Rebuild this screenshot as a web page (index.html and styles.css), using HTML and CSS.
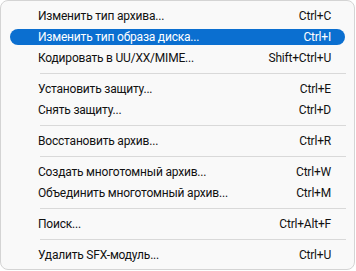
FILE: index.html
```html
<!DOCTYPE html>
<html lang="ru">
<head>
    <meta charset="UTF-8">
    <meta name="viewport" content="width=device-width, initial-scale=1.0">
    <title>Команды</title>
    <link rel="stylesheet" href="styles.css">
</head>

<body>
    <!-- Context menu -->
    <ul class="menu">
        <li class="item"><span>Изменить тип архива...</span><span class="key">Ctrl+C</span></li>
        <li class="item active"><span>Изменить тип образа диска...</span><span class="key">Ctrl+I</span></li>
        <li class="item"><span>Кодировать в UU/XX/MIME...</span><span class="key">Shift+Ctrl+U</span></li>
        <li class="sep"></li>
        <li class="item"><span>Установить защиту...</span><span class="key">Ctrl+E</span></li>
        <li class="item"><span>Снять защиту...</span><span class="key">Ctrl+D</span></li>
        <li class="sep"></li>
        <li class="item"><span>Восстановить архив...</span><span class="key">Ctrl+R</span></li>
        <li class="sep"></li>
        <li class="item"><span>Создать многотомный архив...</span><span class="key">Ctrl+W</span></li>
        <li class="item"><span>Объединить многотомный архив...</span><span class="key">Ctrl+M</span></li>
        <li class="sep"></li>
        <li class="item"><span>Поиск...</span><span class="key">Ctrl+Alt+F</span></li>
        <li class="sep"></li>
        <li class="item"><span>Удалить SFX-модуль...</span><span class="key">Ctrl+U</span></li>
    </ul>
</body>

</html>
```

FILE: styles.css
```css
/* Page */
body {
    margin: 0;
    background-color: #ffffff;
    font-family: Roboto, "Noto Sans", sans-serif;
    font-size: 12px;
    letter-spacing: -0.2px;
    color: #111111;
}

/* Menu box */
.menu {
    list-style: none;
    margin: 0;
    padding: 4.5px 0 0;
    width: 355px;
    height: 270px;
    box-sizing: border-box;
    display: flex;
    flex-direction: column;
    background-color: #f9f9f9;
    border: 1px solid #d4d4d4;
    border-radius: 8px;
}

/* Menu rows */
.item {
    height: 16px;
    margin: 2.5px 9px;
    padding: 0 14px 0 28px;
    display: flex;
    justify-content: space-between;
    align-items: center;
    border-radius: 8px;
    white-space: nowrap;
}

.item.active {
    background-color: #0b6fd0;
    color: #ffffff;
}

/* Separator line */
.sep {
    height: 1px;
    margin: 4.5px 8px 4.5px 39px;
    background-color: #d9d9d9;
}
```
